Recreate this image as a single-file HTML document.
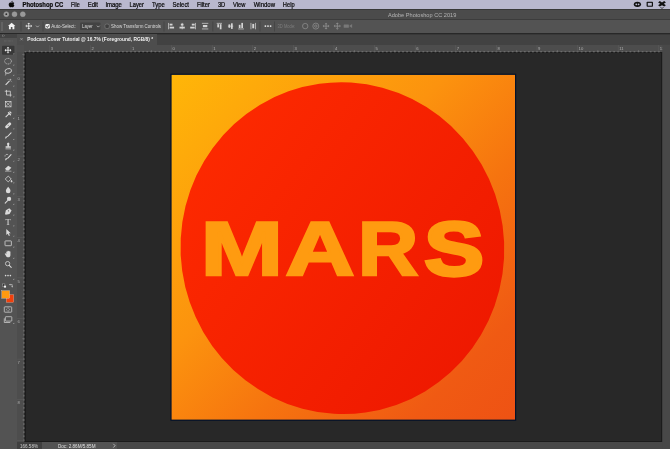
<!DOCTYPE html>
<html><head><meta charset="utf-8"><title>Adobe Photoshop CC 2019</title>
<style>
html,body{margin:0;padding:0;}
body{width:670px;height:449px;overflow:hidden;background:#282828;position:relative;font-family:"Liberation Sans",sans-serif;}
.abs{position:absolute;}
#menubar{left:0;top:0;width:670px;height:9px;background:#b9b8ce;}
#titlebar{left:0;top:9px;width:670px;height:10.2px;background:#4b4b4b;border-top:0.6px solid #393939;box-sizing:border-box;}
#optbar{left:0;top:19.2px;width:670px;height:14.3px;background:#535353;border-top:0.6px solid #3c3c3c;box-sizing:border-box;}
#tabbar{left:0;top:33.5px;width:670px;height:11.2px;background:#424242;border-top:0.6px solid #383838;box-sizing:border-box;}
#tab{left:17.2px;top:34.1px;width:139.6px;height:10.6px;background:#4d4d4d;}
#tools{left:0;top:33.5px;width:16.7px;height:416px;background:#535353;}
#toolshead{left:0;top:33.5px;width:16.7px;height:4px;background:#434343;}
#hruler{left:16.7px;top:44.7px;width:654px;height:7.7px;background:#4d4d4d;}
#vruler{left:16.7px;top:44.7px;width:7.8px;height:398px;background:#4d4d4d;}
#canvas{left:24.5px;top:52.4px;width:637.8px;height:389.8px;background:#282828;box-sizing:border-box;border:0.8px solid #1b1b1b;}
#rscroll{left:662.7px;top:52px;width:7.3px;height:397px;background:#474747;}
#status{left:16.7px;top:442.2px;width:654px;height:7px;background:#484848;}
#szoom{left:16.7px;top:442.2px;width:25px;height:7px;background:#404040;}
#sdoc{left:41.7px;top:442.2px;width:75.5px;height:7px;background:#535353;}
svg{position:absolute;left:0;top:0;overflow:visible;will-change:transform;}
text{font-family:"Liberation Sans",sans-serif;}
.mars text,.mars tspan{font-family:"Liberation Sans",sans-serif;font-weight:bold;vector-effect:non-scaling-stroke;}
.m{font-size:6.6px;fill:#0a0a0a;stroke:#0a0a0a;stroke-width:0.22px;}
.o{font-size:5.2px;fill:#dcdcdc;}
.r{font-size:4.2px;fill:#b0b0b0;}
</style></head><body>
<div class="abs" id="menubar"></div>
<div class="abs" id="titlebar"></div>
<div class="abs" id="optbar"></div>
<div class="abs" id="tabbar"></div>
<div class="abs" id="tab"></div>
<div class="abs" id="hruler"></div>
<div class="abs" id="vruler"></div>
<div class="abs" id="canvas"></div>
<div class="abs" id="rscroll"></div>
<div class="abs" id="status"></div>
<div class="abs" id="szoom"></div>
<div class="abs" id="sdoc"></div>
<div class="abs" id="tools"></div>
<div class="abs" id="toolshead"></div>

<svg id="art" width="670" height="449" viewBox="0 0 670 449">
<defs>
<linearGradient id="gbg" x1="0" y1="0" x2="1" y2="1">
<stop offset="0" stop-color="#ffb608"/><stop offset="0.4" stop-color="#fc930e"/><stop offset="0.62" stop-color="#f6740f"/><stop offset="0.85" stop-color="#f05a13"/><stop offset="1" stop-color="#ee5214"/>
</linearGradient>
<linearGradient id="gc" x1="0" y1="0" x2="1" y2="1">
<stop offset="0" stop-color="#ff2c00"/><stop offset="1" stop-color="#ec1600"/>
</linearGradient>
</defs>
<rect x="170.4" y="73.7" width="345.8" height="347.1" fill="#04122a"/>
<rect x="171.6" y="74.9" width="343.4" height="344.7" fill="url(#gbg)"/>
<ellipse cx="342.4" cy="248.2" rx="161.8" ry="166" transform="rotate(-8 342.4 248.2)" fill="url(#gc)"/>
<g class="mars" font-size="76.02" fill="#ff9b10" stroke="#ff9b10" stroke-width="2.6" stroke-linejoin="miter"><text y="275.3"><tspan x="200.7" textLength="82.21" lengthAdjust="spacingAndGlyphs">M</tspan><tspan x="285.62" textLength="69.01" lengthAdjust="spacingAndGlyphs">A</tspan><tspan x="358.03" textLength="60.18" lengthAdjust="spacingAndGlyphs">R</tspan><tspan x="424.32" textLength="59.68" lengthAdjust="spacingAndGlyphs" stroke-width="3.4">S</tspan></text></g>
</svg>

<svg id="ui" width="670" height="449" viewBox="0 0 670 449"><defs><clipPath id="mclip"><rect x="0" y="0" width="670" height="9"/></clipPath></defs>
<g fill="#0a0a0a"><path d="M11.3 2.6c-.9-.5-2.4.1-2.6 1.6-.2 1.400.900 3 1.700 3 .5 0 .7-.3 1.200-.3s.7.3 1.200.3c.7 0 1.500-1.200 1.600-1.900-.8-.3-1.100-1.500-.1-2.300-.5-.7-1.500-.9-2.100-.5-.3.200-.6.200-.9.100z"/><path d="M11.300 2.300c0-.8.600-1.500 1.400-1.600.1.800-.6 1.600-1.400 1.600z"/></g>
<text class="m" clip-path="url(#mclip)" x="22.5" y="6.75" textLength="40.7" lengthAdjust="spacingAndGlyphs" font-weight="bold">Photoshop CC</text>
<text class="m" clip-path="url(#mclip)" x="71" y="6.75" textLength="8.7" lengthAdjust="spacingAndGlyphs" >File</text>
<text class="m" clip-path="url(#mclip)" x="87.7" y="6.75" textLength="10.3" lengthAdjust="spacingAndGlyphs" >Edit</text>
<text class="m" clip-path="url(#mclip)" x="105.4" y="6.75" textLength="16.5" lengthAdjust="spacingAndGlyphs" >Image</text>
<text class="m" clip-path="url(#mclip)" x="129.6" y="6.75" textLength="14.3" lengthAdjust="spacingAndGlyphs" >Layer</text>
<text class="m" clip-path="url(#mclip)" x="152" y="6.75" textLength="12.8" lengthAdjust="spacingAndGlyphs" >Type</text>
<text class="m" clip-path="url(#mclip)" x="172.5" y="6.75" textLength="16.5" lengthAdjust="spacingAndGlyphs" >Select</text>
<text class="m" clip-path="url(#mclip)" x="196.9" y="6.75" textLength="13.1" lengthAdjust="spacingAndGlyphs" >Filter</text>
<text class="m" clip-path="url(#mclip)" x="217.9" y="6.75" textLength="7.4" lengthAdjust="spacingAndGlyphs" >3D</text>
<text class="m" clip-path="url(#mclip)" x="233" y="6.75" textLength="12.3" lengthAdjust="spacingAndGlyphs" >View</text>
<text class="m" clip-path="url(#mclip)" x="253.7" y="6.75" textLength="21.3" lengthAdjust="spacingAndGlyphs" >Window</text>
<text class="m" clip-path="url(#mclip)" x="282.8" y="6.75" textLength="11.8" lengthAdjust="spacingAndGlyphs" >Help</text>
<g fill="#111"><ellipse cx="637.4" cy="4.3" rx="3.6" ry="2.6"/><rect x="646.6" y="1.8" width="6.4" height="5" rx="0.8"/><rect x="647.8" y="2.9" width="4" height="2.800" fill="#b9b8ce"/><path d="M659.800 1l2.200 1.400 2.200-1.400 1.700 1.400-2.200 1.400 2.200 1.400-1.700 1.400-2.200-1.400-2.200 1.400-1.700-1.400 2.200-1.400-2.200-1.400z"/><path d="M660.300 7l1.700 1.100 1.700-1.100v.6l-1.700 1.100-1.700-1.100z"/></g>
<g fill="#b9b8ce"><circle cx="636.3" cy="4.3" r="0.9"/><circle cx="638.600" cy="4.300" r="0.900"/></g>
<g fill="#999" stroke="#a6a6a6" stroke-width="0.4"><circle cx="6.3" cy="14.2" r="2.500"/><circle cx="14.5" cy="14.2" r="2.500"/><circle cx="22.8" cy="14.2" r="2.500"/></g><circle cx="6.3" cy="14.2" r="0.9" fill="#2e2e2e"/>
<text class="o"  x="388" y="16.6" textLength="68.3" lengthAdjust="spacingAndGlyphs" style="fill:#b4b4b4;font-size:5.4px">Adobe Photoshop CC 2019</text>
<g fill="#6e6e6e"><rect x="1.2" y="22" width="0.6" height="9"/><rect x="2.4" y="22" width="0.6" height="9"/></g>
<path d="M11.650 22.700l3.700 3.200h-1v3.300h-1.900v-2.100h-1.600v2.100h-1.900v-3.300h-1z" fill="#f2f2f2"/>
<rect x="20.7" y="21.5" width="0.6" height="10" fill="#3e3e3e"/>
<rect x="42.7" y="21.5" width="0.6" height="10" fill="#3e3e3e"/>
<rect x="163.7" y="21.5" width="0.6" height="10" fill="#3e3e3e"/>
<rect x="212.6" y="21.5" width="0.6" height="10" fill="#3e3e3e"/>
<rect x="259.7" y="21.5" width="0.6" height="10" fill="#3e3e3e"/>
<rect x="274.2" y="21.5" width="0.6" height="10" fill="#3e3e3e"/>
<g fill="#e6e6e6"><path d="M28.75 22.650000000000002l1.428 1.428h-2.856z M28.75 29.45l1.428 -1.428h-2.856z M25.35 26.05l1.428 1.428v-2.856z M32.15 26.05l-1.428 1.428v-2.856z"/><rect x="28.3" y="24.078000000000003" width="0.9" height="3.944"/><rect x="26.778000000000002" y="25.6" width="3.944" height="0.9"/></g>
<path d="M36 25.600l1.500 1.500 1.500-1.500" fill="none" stroke="#cfcfcf" stroke-width="0.7"/>
<rect x="45.3" y="24.0" width="4.6" height="4.600" rx="1.4" fill="#efefef"/><path d="M46.400 26.300l1 1.100 1.500-2.100" fill="none" stroke="#2a2a2a" stroke-width="0.9"/>
<text class="o"  x="51.2" y="28.1" textLength="24.7" lengthAdjust="spacingAndGlyphs" >Auto-Select:</text>
<rect x="80" y="22.6" width="20.500" height="7.400" rx="0.800" fill="#434343"/>
<text class="o"  x="82.1" y="28.1" textLength="10.7" lengthAdjust="spacingAndGlyphs" >Layer</text>
<path d="M96.9 25.700l1.400 1.400 1.400-1.400" fill="none" stroke="#cfcfcf" stroke-width="0.7"/>
<rect x="104.9" y="24.1" width="4.400" height="4.400" rx="1.5" fill="#3e3e3e" stroke="#858585" stroke-width="0.6"/>
<text class="o"  x="111" y="28.1" textLength="50.1" lengthAdjust="spacingAndGlyphs" >Show Transform Controls</text>
<g fill="#d4d4d4"><rect x="168.3" y="22.900000000000002" width="0.7" height="6.4"/><rect x="169.60000000000002" y="23.700000000000003" width="2.8999999999999915" height="1.800"/><rect x="169.60000000000002" y="26.700000000000003" width="4.499999999999983" height="1.800"/></g>
<g fill="#d4d4d4"><rect x="181.8" y="22.900000000000002" width="0.7" height="6.4"/><rect x="180.825" y="23.700000000000003" width="2.6500000000000057" height="1.800"/><rect x="179.5" y="26.700000000000003" width="5.300000000000011" height="1.800"/></g>
<g fill="#d4d4d4"><rect x="195.3" y="22.900000000000002" width="0.7" height="6.4"/><rect x="191.79999999999998" y="23.700000000000003" width="2.9000000000000057" height="1.800"/><rect x="190.2" y="26.700000000000003" width="4.5000000000000115" height="1.800"/></g>
<g fill="#d4d4d4"><rect x="201.9" y="22.900000000000002" width="6.400000000000006" height="0.7"/><rect x="201.9" y="28.6" width="6.400000000000006" height="0.7"/><rect x="202.9" y="25.0" width="4.400000000000006" height="2.200"/></g>
<g fill="#d4d4d4"><rect x="216.7" y="22.900000000000002" width="5.300000000000011" height="0.7"/><rect x="217.29999999999998" y="24.200000000000003" width="1.700" height="3.200"/><rect x="219.79999999999998" y="24.200000000000003" width="1.700" height="5.100"/></g>
<g fill="#d4d4d4"><rect x="227.9" y="25.75" width="5.299999999999983" height="0.7"/><rect x="228.5" y="24.400000000000002" width="1.700" height="3.400"/><rect x="231.0" y="23.3" width="1.700" height="5.600"/></g>
<g fill="#d4d4d4"><rect x="238.2" y="28.6" width="5.700000000000017" height="0.7"/><rect x="238.79999999999998" y="24.8" width="1.700" height="3.200"/><rect x="241.29999999999998" y="22.900000000000002" width="1.700" height="5.100"/></g>
<g fill="#d4d4d4"><rect x="250.6" y="22.900000000000002" width="0.7" height="6.4"/><rect x="255.20000000000002" y="22.900000000000002" width="0.7" height="6.4"/><rect x="252.29999999999998" y="23.900000000000002" width="1.9000000000000115" height="4.400"/></g>
<g fill="#e8e8e8"><circle cx="265.4" cy="26.1" r="0.900"/><circle cx="268" cy="26.1" r="0.900"/><circle cx="270.600" cy="26.1" r="0.900"/></g>
<text class="o"  x="277.6" y="28.1" textLength="17.7" lengthAdjust="spacingAndGlyphs" style="fill:#7c7c7c">3D Mode:</text>
<g fill="none" stroke="#8c8c8c" stroke-width="0.800"><circle cx="305.2" cy="26.1" r="2.700"/><circle cx="315.800" cy="26.1" r="3"/><circle cx="315.800" cy="26.1" r="1.200"/></g>
<g fill="#8c8c8c"><path d="M326.05 22.700000000000003l1.428 1.428h-2.856z M326.05 29.5l1.428 -1.428h-2.856z M322.65000000000003 26.1l1.428 1.428v-2.856z M329.45 26.1l-1.428 1.428v-2.856z"/><rect x="325.6" y="24.128000000000004" width="0.9" height="3.944"/><rect x="324.07800000000003" y="25.650000000000002" width="3.944" height="0.9"/></g>
<g fill="#8c8c8c"><path d="M337.3 22.5l1.512 1.512h-3.024z M337.3 29.700000000000003l1.512 -1.512h-3.024z M333.7 26.1l1.512 1.512v-3.024z M340.90000000000003 26.1l-1.512 1.512v-3.024z"/><rect x="336.85" y="24.012" width="0.9" height="4.176"/><rect x="335.212" y="25.650000000000002" width="4.176" height="0.9"/></g>
<g fill="#787878"><rect x="343.700" y="24.400" width="5.200" height="3.400" rx="0.500"/><path d="M349.200 26.100l2.900-2v4z"/></g>
<path d="M20.300 38l2.400 2.400m0-2.400l-2.400 2.400" stroke="#a8a8a8" stroke-width="0.6" fill="none"/>
<text class="o"  x="27.2" y="41.2" textLength="125.9" lengthAdjust="spacingAndGlyphs" font-weight="bold" style="fill:#f0f0f0;font-size:5.4px">Podcast Cover Tutorial @ 16.7% (Foreground, RGB/8) *</text>
<path d="M2 34.800l1 .900-1 .900m1.500-1.800l1 .900-1 .900" stroke="#a0a0a0" stroke-width="0.5" fill="none"/>
<g fill="#6a6a6a"><rect x="4.0" y="40.3" width="0.6" height="0.6"/><rect x="4.0" y="41.500" width="0.6" height="0.6"/><rect x="5.3" y="40.3" width="0.6" height="0.6"/><rect x="5.3" y="41.500" width="0.6" height="0.6"/><rect x="6.6" y="40.3" width="0.6" height="0.6"/><rect x="6.6" y="41.500" width="0.6" height="0.6"/><rect x="7.9" y="40.3" width="0.6" height="0.6"/><rect x="7.9" y="41.500" width="0.6" height="0.6"/><rect x="9.2" y="40.3" width="0.6" height="0.6"/><rect x="9.2" y="41.500" width="0.6" height="0.6"/><rect x="10.5" y="40.3" width="0.6" height="0.6"/><rect x="10.5" y="41.500" width="0.6" height="0.6"/><rect x="11.8" y="40.3" width="0.6" height="0.6"/><rect x="11.8" y="41.500" width="0.6" height="0.6"/></g>
<rect x="24.54" y="51.3" width="1.8" height="1.0" fill="#787878"/><rect x="28.60" y="51.3" width="1.8" height="1.0" fill="#787878"/><rect x="29.10" y="50.3" width="0.8" height="1.2" fill="#787878"/><rect x="32.66" y="51.3" width="1.8" height="1.0" fill="#787878"/><rect x="36.72" y="51.3" width="1.8" height="1.0" fill="#787878"/><rect x="40.78" y="51.3" width="1.8" height="1.0" fill="#787878"/><rect x="44.84" y="51.3" width="1.8" height="1.0" fill="#787878"/><rect x="48.90" y="51.3" width="1.8" height="1.0" fill="#787878"/><rect x="49.50" y="45.2" width="0.6" height="6.4" fill="#5c5c5c"/><text class="r" x="50.80" y="50.2">3</text><rect x="52.96" y="51.3" width="1.8" height="1.0" fill="#787878"/><rect x="57.02" y="51.3" width="1.8" height="1.0" fill="#787878"/><rect x="61.08" y="51.3" width="1.8" height="1.0" fill="#787878"/><rect x="65.14" y="51.3" width="1.8" height="1.0" fill="#787878"/><rect x="69.20" y="51.3" width="1.8" height="1.0" fill="#787878"/><rect x="69.70" y="50.3" width="0.8" height="1.2" fill="#787878"/><rect x="73.26" y="51.3" width="1.8" height="1.0" fill="#787878"/><rect x="77.32" y="51.3" width="1.8" height="1.0" fill="#787878"/><rect x="81.38" y="51.3" width="1.8" height="1.0" fill="#787878"/><rect x="85.44" y="51.3" width="1.8" height="1.0" fill="#787878"/><rect x="89.50" y="51.3" width="1.8" height="1.0" fill="#787878"/><rect x="90.10" y="45.2" width="0.6" height="6.4" fill="#5c5c5c"/><text class="r" x="91.40" y="50.2">2</text><rect x="93.56" y="51.3" width="1.8" height="1.0" fill="#787878"/><rect x="97.62" y="51.3" width="1.8" height="1.0" fill="#787878"/><rect x="101.68" y="51.3" width="1.8" height="1.0" fill="#787878"/><rect x="105.74" y="51.3" width="1.8" height="1.0" fill="#787878"/><rect x="109.80" y="51.3" width="1.8" height="1.0" fill="#787878"/><rect x="110.30" y="50.3" width="0.8" height="1.2" fill="#787878"/><rect x="113.86" y="51.3" width="1.8" height="1.0" fill="#787878"/><rect x="117.92" y="51.3" width="1.8" height="1.0" fill="#787878"/><rect x="121.98" y="51.3" width="1.8" height="1.0" fill="#787878"/><rect x="126.04" y="51.3" width="1.8" height="1.0" fill="#787878"/><rect x="130.10" y="51.3" width="1.8" height="1.0" fill="#787878"/><rect x="130.70" y="45.2" width="0.6" height="6.4" fill="#5c5c5c"/><text class="r" x="132.00" y="50.2">1</text><rect x="134.16" y="51.3" width="1.8" height="1.0" fill="#787878"/><rect x="138.22" y="51.3" width="1.8" height="1.0" fill="#787878"/><rect x="142.28" y="51.3" width="1.8" height="1.0" fill="#787878"/><rect x="146.34" y="51.3" width="1.8" height="1.0" fill="#787878"/><rect x="150.40" y="51.3" width="1.8" height="1.0" fill="#787878"/><rect x="150.90" y="50.3" width="0.8" height="1.2" fill="#787878"/><rect x="154.46" y="51.3" width="1.8" height="1.0" fill="#787878"/><rect x="158.52" y="51.3" width="1.8" height="1.0" fill="#787878"/><rect x="162.58" y="51.3" width="1.8" height="1.0" fill="#787878"/><rect x="166.64" y="51.3" width="1.8" height="1.0" fill="#787878"/><rect x="170.70" y="51.3" width="1.8" height="1.0" fill="#787878"/><rect x="171.30" y="45.2" width="0.6" height="6.4" fill="#5c5c5c"/><text class="r" x="172.60" y="50.2">0</text><rect x="174.76" y="51.3" width="1.8" height="1.0" fill="#787878"/><rect x="178.82" y="51.3" width="1.8" height="1.0" fill="#787878"/><rect x="182.88" y="51.3" width="1.8" height="1.0" fill="#787878"/><rect x="186.94" y="51.3" width="1.8" height="1.0" fill="#787878"/><rect x="191.00" y="51.3" width="1.8" height="1.0" fill="#787878"/><rect x="191.50" y="50.3" width="0.8" height="1.2" fill="#787878"/><rect x="195.06" y="51.3" width="1.8" height="1.0" fill="#787878"/><rect x="199.12" y="51.3" width="1.8" height="1.0" fill="#787878"/><rect x="203.18" y="51.3" width="1.8" height="1.0" fill="#787878"/><rect x="207.24" y="51.3" width="1.8" height="1.0" fill="#787878"/><rect x="211.30" y="51.3" width="1.8" height="1.0" fill="#787878"/><rect x="211.90" y="45.2" width="0.6" height="6.4" fill="#5c5c5c"/><text class="r" x="213.20" y="50.2">1</text><rect x="215.36" y="51.3" width="1.8" height="1.0" fill="#787878"/><rect x="219.42" y="51.3" width="1.8" height="1.0" fill="#787878"/><rect x="223.48" y="51.3" width="1.8" height="1.0" fill="#787878"/><rect x="227.54" y="51.3" width="1.8" height="1.0" fill="#787878"/><rect x="231.60" y="51.3" width="1.8" height="1.0" fill="#787878"/><rect x="232.10" y="50.3" width="0.8" height="1.2" fill="#787878"/><rect x="235.66" y="51.3" width="1.8" height="1.0" fill="#787878"/><rect x="239.72" y="51.3" width="1.8" height="1.0" fill="#787878"/><rect x="243.78" y="51.3" width="1.8" height="1.0" fill="#787878"/><rect x="247.84" y="51.3" width="1.8" height="1.0" fill="#787878"/><rect x="251.90" y="51.3" width="1.8" height="1.0" fill="#787878"/><rect x="252.50" y="45.2" width="0.6" height="6.4" fill="#5c5c5c"/><text class="r" x="253.80" y="50.2">2</text><rect x="255.96" y="51.3" width="1.8" height="1.0" fill="#787878"/><rect x="260.02" y="51.3" width="1.8" height="1.0" fill="#787878"/><rect x="264.08" y="51.3" width="1.8" height="1.0" fill="#787878"/><rect x="268.14" y="51.3" width="1.8" height="1.0" fill="#787878"/><rect x="272.20" y="51.3" width="1.8" height="1.0" fill="#787878"/><rect x="272.70" y="50.3" width="0.8" height="1.2" fill="#787878"/><rect x="276.26" y="51.3" width="1.8" height="1.0" fill="#787878"/><rect x="280.32" y="51.3" width="1.8" height="1.0" fill="#787878"/><rect x="284.38" y="51.3" width="1.8" height="1.0" fill="#787878"/><rect x="288.44" y="51.3" width="1.8" height="1.0" fill="#787878"/><rect x="292.50" y="51.3" width="1.8" height="1.0" fill="#787878"/><rect x="293.10" y="45.2" width="0.6" height="6.4" fill="#5c5c5c"/><text class="r" x="294.40" y="50.2">3</text><rect x="296.56" y="51.3" width="1.8" height="1.0" fill="#787878"/><rect x="300.62" y="51.3" width="1.8" height="1.0" fill="#787878"/><rect x="304.68" y="51.3" width="1.8" height="1.0" fill="#787878"/><rect x="308.74" y="51.3" width="1.8" height="1.0" fill="#787878"/><rect x="312.80" y="51.3" width="1.8" height="1.0" fill="#787878"/><rect x="313.30" y="50.3" width="0.8" height="1.2" fill="#787878"/><rect x="316.86" y="51.3" width="1.8" height="1.0" fill="#787878"/><rect x="320.92" y="51.3" width="1.8" height="1.0" fill="#787878"/><rect x="324.98" y="51.3" width="1.8" height="1.0" fill="#787878"/><rect x="329.04" y="51.3" width="1.8" height="1.0" fill="#787878"/><rect x="333.10" y="51.3" width="1.8" height="1.0" fill="#787878"/><rect x="333.70" y="45.2" width="0.6" height="6.4" fill="#5c5c5c"/><text class="r" x="335.00" y="50.2">4</text><rect x="337.16" y="51.3" width="1.8" height="1.0" fill="#787878"/><rect x="341.22" y="51.3" width="1.8" height="1.0" fill="#787878"/><rect x="345.28" y="51.3" width="1.8" height="1.0" fill="#787878"/><rect x="349.34" y="51.3" width="1.8" height="1.0" fill="#787878"/><rect x="353.40" y="51.3" width="1.8" height="1.0" fill="#787878"/><rect x="353.90" y="50.3" width="0.8" height="1.2" fill="#787878"/><rect x="357.46" y="51.3" width="1.8" height="1.0" fill="#787878"/><rect x="361.52" y="51.3" width="1.8" height="1.0" fill="#787878"/><rect x="365.58" y="51.3" width="1.8" height="1.0" fill="#787878"/><rect x="369.64" y="51.3" width="1.8" height="1.0" fill="#787878"/><rect x="373.70" y="51.3" width="1.8" height="1.0" fill="#787878"/><rect x="374.30" y="45.2" width="0.6" height="6.4" fill="#5c5c5c"/><text class="r" x="375.60" y="50.2">5</text><rect x="377.76" y="51.3" width="1.8" height="1.0" fill="#787878"/><rect x="381.82" y="51.3" width="1.8" height="1.0" fill="#787878"/><rect x="385.88" y="51.3" width="1.8" height="1.0" fill="#787878"/><rect x="389.94" y="51.3" width="1.8" height="1.0" fill="#787878"/><rect x="394.00" y="51.3" width="1.8" height="1.0" fill="#787878"/><rect x="394.50" y="50.3" width="0.8" height="1.2" fill="#787878"/><rect x="398.06" y="51.3" width="1.8" height="1.0" fill="#787878"/><rect x="402.12" y="51.3" width="1.8" height="1.0" fill="#787878"/><rect x="406.18" y="51.3" width="1.8" height="1.0" fill="#787878"/><rect x="410.24" y="51.3" width="1.8" height="1.0" fill="#787878"/><rect x="414.30" y="51.3" width="1.8" height="1.0" fill="#787878"/><rect x="414.90" y="45.2" width="0.6" height="6.4" fill="#5c5c5c"/><text class="r" x="416.20" y="50.2">6</text><rect x="418.36" y="51.3" width="1.8" height="1.0" fill="#787878"/><rect x="422.42" y="51.3" width="1.8" height="1.0" fill="#787878"/><rect x="426.48" y="51.3" width="1.8" height="1.0" fill="#787878"/><rect x="430.54" y="51.3" width="1.8" height="1.0" fill="#787878"/><rect x="434.60" y="51.3" width="1.8" height="1.0" fill="#787878"/><rect x="435.10" y="50.3" width="0.8" height="1.2" fill="#787878"/><rect x="438.66" y="51.3" width="1.8" height="1.0" fill="#787878"/><rect x="442.72" y="51.3" width="1.8" height="1.0" fill="#787878"/><rect x="446.78" y="51.3" width="1.8" height="1.0" fill="#787878"/><rect x="450.84" y="51.3" width="1.8" height="1.0" fill="#787878"/><rect x="454.90" y="51.3" width="1.8" height="1.0" fill="#787878"/><rect x="455.50" y="45.2" width="0.6" height="6.4" fill="#5c5c5c"/><text class="r" x="456.80" y="50.2">7</text><rect x="458.96" y="51.3" width="1.8" height="1.0" fill="#787878"/><rect x="463.02" y="51.3" width="1.8" height="1.0" fill="#787878"/><rect x="467.08" y="51.3" width="1.8" height="1.0" fill="#787878"/><rect x="471.14" y="51.3" width="1.8" height="1.0" fill="#787878"/><rect x="475.20" y="51.3" width="1.8" height="1.0" fill="#787878"/><rect x="475.70" y="50.3" width="0.8" height="1.2" fill="#787878"/><rect x="479.26" y="51.3" width="1.8" height="1.0" fill="#787878"/><rect x="483.32" y="51.3" width="1.8" height="1.0" fill="#787878"/><rect x="487.38" y="51.3" width="1.8" height="1.0" fill="#787878"/><rect x="491.44" y="51.3" width="1.8" height="1.0" fill="#787878"/><rect x="495.50" y="51.3" width="1.8" height="1.0" fill="#787878"/><rect x="496.10" y="45.2" width="0.6" height="6.4" fill="#5c5c5c"/><text class="r" x="497.40" y="50.2">8</text><rect x="499.56" y="51.3" width="1.8" height="1.0" fill="#787878"/><rect x="503.62" y="51.3" width="1.8" height="1.0" fill="#787878"/><rect x="507.68" y="51.3" width="1.8" height="1.0" fill="#787878"/><rect x="511.74" y="51.3" width="1.8" height="1.0" fill="#787878"/><rect x="515.80" y="51.3" width="1.8" height="1.0" fill="#787878"/><rect x="516.30" y="50.3" width="0.8" height="1.2" fill="#787878"/><rect x="519.86" y="51.3" width="1.8" height="1.0" fill="#787878"/><rect x="523.92" y="51.3" width="1.8" height="1.0" fill="#787878"/><rect x="527.98" y="51.3" width="1.8" height="1.0" fill="#787878"/><rect x="532.04" y="51.3" width="1.8" height="1.0" fill="#787878"/><rect x="536.10" y="51.3" width="1.8" height="1.0" fill="#787878"/><rect x="536.70" y="45.2" width="0.6" height="6.4" fill="#5c5c5c"/><text class="r" x="538.00" y="50.2">9</text><rect x="540.16" y="51.3" width="1.8" height="1.0" fill="#787878"/><rect x="544.22" y="51.3" width="1.8" height="1.0" fill="#787878"/><rect x="548.28" y="51.3" width="1.8" height="1.0" fill="#787878"/><rect x="552.34" y="51.3" width="1.8" height="1.0" fill="#787878"/><rect x="556.40" y="51.3" width="1.8" height="1.0" fill="#787878"/><rect x="556.90" y="50.3" width="0.8" height="1.2" fill="#787878"/><rect x="560.46" y="51.3" width="1.8" height="1.0" fill="#787878"/><rect x="564.52" y="51.3" width="1.8" height="1.0" fill="#787878"/><rect x="568.58" y="51.3" width="1.8" height="1.0" fill="#787878"/><rect x="572.64" y="51.3" width="1.8" height="1.0" fill="#787878"/><rect x="576.70" y="51.3" width="1.8" height="1.0" fill="#787878"/><rect x="577.30" y="45.2" width="0.6" height="6.4" fill="#5c5c5c"/><text class="r" x="578.60" y="50.2">10</text><rect x="580.76" y="51.3" width="1.8" height="1.0" fill="#787878"/><rect x="584.82" y="51.3" width="1.8" height="1.0" fill="#787878"/><rect x="588.88" y="51.3" width="1.8" height="1.0" fill="#787878"/><rect x="592.94" y="51.3" width="1.8" height="1.0" fill="#787878"/><rect x="597.00" y="51.3" width="1.8" height="1.0" fill="#787878"/><rect x="597.50" y="50.3" width="0.8" height="1.2" fill="#787878"/><rect x="601.06" y="51.3" width="1.8" height="1.0" fill="#787878"/><rect x="605.12" y="51.3" width="1.8" height="1.0" fill="#787878"/><rect x="609.18" y="51.3" width="1.8" height="1.0" fill="#787878"/><rect x="613.24" y="51.3" width="1.8" height="1.0" fill="#787878"/><rect x="617.30" y="51.3" width="1.8" height="1.0" fill="#787878"/><rect x="617.90" y="45.2" width="0.6" height="6.4" fill="#5c5c5c"/><text class="r" x="619.20" y="50.2">11</text><rect x="621.36" y="51.3" width="1.8" height="1.0" fill="#787878"/><rect x="625.42" y="51.3" width="1.8" height="1.0" fill="#787878"/><rect x="629.48" y="51.3" width="1.8" height="1.0" fill="#787878"/><rect x="633.54" y="51.3" width="1.8" height="1.0" fill="#787878"/><rect x="637.60" y="51.3" width="1.8" height="1.0" fill="#787878"/><rect x="638.10" y="50.3" width="0.8" height="1.2" fill="#787878"/><rect x="641.66" y="51.3" width="1.8" height="1.0" fill="#787878"/><rect x="645.72" y="51.3" width="1.8" height="1.0" fill="#787878"/><rect x="649.78" y="51.3" width="1.8" height="1.0" fill="#787878"/><rect x="653.84" y="51.3" width="1.8" height="1.0" fill="#787878"/><rect x="657.90" y="51.3" width="1.8" height="1.0" fill="#787878"/><rect x="658.50" y="45.2" width="0.6" height="6.4" fill="#5c5c5c"/><text class="r" x="659.80" y="50.2">12</text><rect x="23.4" y="53.70" width="1.0" height="1.8" fill="#787878"/><rect x="22.4" y="54.20" width="1.2" height="0.8" fill="#787878"/><rect x="23.4" y="57.76" width="1.0" height="1.8" fill="#787878"/><rect x="23.4" y="61.82" width="1.0" height="1.8" fill="#787878"/><rect x="23.4" y="65.88" width="1.0" height="1.8" fill="#787878"/><rect x="23.4" y="69.94" width="1.0" height="1.8" fill="#787878"/><rect x="23.4" y="74.00" width="1.0" height="1.8" fill="#787878"/><rect x="17.2" y="74.60" width="6.4" height="0.6" fill="#5c5c5c"/><text class="r" x="17.6" y="79.50">0</text><rect x="23.4" y="78.06" width="1.0" height="1.8" fill="#787878"/><rect x="23.4" y="82.12" width="1.0" height="1.8" fill="#787878"/><rect x="23.4" y="86.18" width="1.0" height="1.8" fill="#787878"/><rect x="23.4" y="90.24" width="1.0" height="1.8" fill="#787878"/><rect x="23.4" y="94.30" width="1.0" height="1.8" fill="#787878"/><rect x="22.4" y="94.80" width="1.2" height="0.8" fill="#787878"/><rect x="23.4" y="98.36" width="1.0" height="1.8" fill="#787878"/><rect x="23.4" y="102.42" width="1.0" height="1.8" fill="#787878"/><rect x="23.4" y="106.48" width="1.0" height="1.8" fill="#787878"/><rect x="23.4" y="110.54" width="1.0" height="1.8" fill="#787878"/><rect x="23.4" y="114.60" width="1.0" height="1.8" fill="#787878"/><rect x="17.2" y="115.20" width="6.4" height="0.6" fill="#5c5c5c"/><text class="r" x="17.6" y="120.10">1</text><rect x="23.4" y="118.66" width="1.0" height="1.8" fill="#787878"/><rect x="23.4" y="122.72" width="1.0" height="1.8" fill="#787878"/><rect x="23.4" y="126.78" width="1.0" height="1.8" fill="#787878"/><rect x="23.4" y="130.84" width="1.0" height="1.8" fill="#787878"/><rect x="23.4" y="134.90" width="1.0" height="1.8" fill="#787878"/><rect x="22.4" y="135.40" width="1.2" height="0.8" fill="#787878"/><rect x="23.4" y="138.96" width="1.0" height="1.8" fill="#787878"/><rect x="23.4" y="143.02" width="1.0" height="1.8" fill="#787878"/><rect x="23.4" y="147.08" width="1.0" height="1.8" fill="#787878"/><rect x="23.4" y="151.14" width="1.0" height="1.8" fill="#787878"/><rect x="23.4" y="155.20" width="1.0" height="1.8" fill="#787878"/><rect x="17.2" y="155.80" width="6.4" height="0.6" fill="#5c5c5c"/><text class="r" x="17.6" y="160.70">2</text><rect x="23.4" y="159.26" width="1.0" height="1.8" fill="#787878"/><rect x="23.4" y="163.32" width="1.0" height="1.8" fill="#787878"/><rect x="23.4" y="167.38" width="1.0" height="1.8" fill="#787878"/><rect x="23.4" y="171.44" width="1.0" height="1.8" fill="#787878"/><rect x="23.4" y="175.50" width="1.0" height="1.8" fill="#787878"/><rect x="22.4" y="176.00" width="1.2" height="0.8" fill="#787878"/><rect x="23.4" y="179.56" width="1.0" height="1.8" fill="#787878"/><rect x="23.4" y="183.62" width="1.0" height="1.8" fill="#787878"/><rect x="23.4" y="187.68" width="1.0" height="1.8" fill="#787878"/><rect x="23.4" y="191.74" width="1.0" height="1.8" fill="#787878"/><rect x="23.4" y="195.80" width="1.0" height="1.8" fill="#787878"/><rect x="17.2" y="196.40" width="6.4" height="0.6" fill="#5c5c5c"/><text class="r" x="17.6" y="201.30">3</text><rect x="23.4" y="199.86" width="1.0" height="1.8" fill="#787878"/><rect x="23.4" y="203.92" width="1.0" height="1.8" fill="#787878"/><rect x="23.4" y="207.98" width="1.0" height="1.8" fill="#787878"/><rect x="23.4" y="212.04" width="1.0" height="1.8" fill="#787878"/><rect x="23.4" y="216.10" width="1.0" height="1.8" fill="#787878"/><rect x="22.4" y="216.60" width="1.2" height="0.8" fill="#787878"/><rect x="23.4" y="220.16" width="1.0" height="1.8" fill="#787878"/><rect x="23.4" y="224.22" width="1.0" height="1.8" fill="#787878"/><rect x="23.4" y="228.28" width="1.0" height="1.8" fill="#787878"/><rect x="23.4" y="232.34" width="1.0" height="1.8" fill="#787878"/><rect x="23.4" y="236.40" width="1.0" height="1.8" fill="#787878"/><rect x="17.2" y="237.00" width="6.4" height="0.6" fill="#5c5c5c"/><text class="r" x="17.6" y="241.90">4</text><rect x="23.4" y="240.46" width="1.0" height="1.8" fill="#787878"/><rect x="23.4" y="244.52" width="1.0" height="1.8" fill="#787878"/><rect x="23.4" y="248.58" width="1.0" height="1.8" fill="#787878"/><rect x="23.4" y="252.64" width="1.0" height="1.8" fill="#787878"/><rect x="23.4" y="256.70" width="1.0" height="1.8" fill="#787878"/><rect x="22.4" y="257.20" width="1.2" height="0.8" fill="#787878"/><rect x="23.4" y="260.76" width="1.0" height="1.8" fill="#787878"/><rect x="23.4" y="264.82" width="1.0" height="1.8" fill="#787878"/><rect x="23.4" y="268.88" width="1.0" height="1.8" fill="#787878"/><rect x="23.4" y="272.94" width="1.0" height="1.8" fill="#787878"/><rect x="23.4" y="277.00" width="1.0" height="1.8" fill="#787878"/><rect x="17.2" y="277.60" width="6.4" height="0.6" fill="#5c5c5c"/><text class="r" x="17.6" y="282.50">5</text><rect x="23.4" y="281.06" width="1.0" height="1.8" fill="#787878"/><rect x="23.4" y="285.12" width="1.0" height="1.8" fill="#787878"/><rect x="23.4" y="289.18" width="1.0" height="1.8" fill="#787878"/><rect x="23.4" y="293.24" width="1.0" height="1.8" fill="#787878"/><rect x="23.4" y="297.30" width="1.0" height="1.8" fill="#787878"/><rect x="22.4" y="297.80" width="1.2" height="0.8" fill="#787878"/><rect x="23.4" y="301.36" width="1.0" height="1.8" fill="#787878"/><rect x="23.4" y="305.42" width="1.0" height="1.8" fill="#787878"/><rect x="23.4" y="309.48" width="1.0" height="1.8" fill="#787878"/><rect x="23.4" y="313.54" width="1.0" height="1.8" fill="#787878"/><rect x="23.4" y="317.60" width="1.0" height="1.8" fill="#787878"/><rect x="17.2" y="318.20" width="6.4" height="0.6" fill="#5c5c5c"/><text class="r" x="17.6" y="323.10">6</text><rect x="23.4" y="321.66" width="1.0" height="1.8" fill="#787878"/><rect x="23.4" y="325.72" width="1.0" height="1.8" fill="#787878"/><rect x="23.4" y="329.78" width="1.0" height="1.8" fill="#787878"/><rect x="23.4" y="333.84" width="1.0" height="1.8" fill="#787878"/><rect x="23.4" y="337.90" width="1.0" height="1.8" fill="#787878"/><rect x="22.4" y="338.40" width="1.2" height="0.8" fill="#787878"/><rect x="23.4" y="341.96" width="1.0" height="1.8" fill="#787878"/><rect x="23.4" y="346.02" width="1.0" height="1.8" fill="#787878"/><rect x="23.4" y="350.08" width="1.0" height="1.8" fill="#787878"/><rect x="23.4" y="354.14" width="1.0" height="1.8" fill="#787878"/><rect x="23.4" y="358.20" width="1.0" height="1.8" fill="#787878"/><rect x="17.2" y="358.80" width="6.4" height="0.6" fill="#5c5c5c"/><text class="r" x="17.6" y="363.70">7</text><rect x="23.4" y="362.26" width="1.0" height="1.8" fill="#787878"/><rect x="23.4" y="366.32" width="1.0" height="1.8" fill="#787878"/><rect x="23.4" y="370.38" width="1.0" height="1.8" fill="#787878"/><rect x="23.4" y="374.44" width="1.0" height="1.8" fill="#787878"/><rect x="23.4" y="378.50" width="1.0" height="1.8" fill="#787878"/><rect x="22.4" y="379.00" width="1.2" height="0.8" fill="#787878"/><rect x="23.4" y="382.56" width="1.0" height="1.8" fill="#787878"/><rect x="23.4" y="386.62" width="1.0" height="1.8" fill="#787878"/><rect x="23.4" y="390.68" width="1.0" height="1.8" fill="#787878"/><rect x="23.4" y="394.74" width="1.0" height="1.8" fill="#787878"/><rect x="23.4" y="398.80" width="1.0" height="1.8" fill="#787878"/><rect x="17.2" y="399.40" width="6.4" height="0.6" fill="#5c5c5c"/><text class="r" x="17.6" y="404.30">8</text><rect x="23.4" y="402.86" width="1.0" height="1.8" fill="#787878"/><rect x="23.4" y="406.92" width="1.0" height="1.8" fill="#787878"/><rect x="23.4" y="410.98" width="1.0" height="1.8" fill="#787878"/><rect x="23.4" y="415.04" width="1.0" height="1.8" fill="#787878"/><rect x="23.4" y="419.10" width="1.0" height="1.8" fill="#787878"/><rect x="22.4" y="419.60" width="1.2" height="0.8" fill="#787878"/><rect x="23.4" y="423.16" width="1.0" height="1.8" fill="#787878"/><rect x="23.4" y="427.22" width="1.0" height="1.8" fill="#787878"/><rect x="23.4" y="431.28" width="1.0" height="1.8" fill="#787878"/><rect x="23.4" y="435.34" width="1.0" height="1.8" fill="#787878"/><rect x="23.4" y="439.40" width="1.0" height="1.8" fill="#787878"/><rect x="17.2" y="440.00" width="6.4" height="0.6" fill="#5c5c5c"/>
<rect x="662.3" y="44.7" width="7.7" height="404.3" fill="#484848"/>
<rect x="16.7" y="44.7" width="7.6" height="7.3" fill="#505050"/>
<text class="o"  x="20" y="447.6" textLength="18" lengthAdjust="spacingAndGlyphs" style="font-size:4.8px;fill:#d0d0d0">166.58%</text>
<text class="o"  x="58" y="447.6" textLength="37.5" lengthAdjust="spacingAndGlyphs" style="font-size:4.8px;fill:#e0e0e0">Doc: 2.86M/5.85M</text>
<path d="M113.300 443.800l1.800 1.900-1.800 1.900" stroke="#d8d8d8" stroke-width="0.7" fill="none"/>
</svg>
<svg id="toolsvg" width="670" height="449" viewBox="0 0 670 449">
<rect x="2" y="45.8" width="12.400" height="9" rx="0.8" fill="#383838"/>
<g fill="#f0f0f0"><path d="M8.0 46.800000000000004l1.428 1.428h-2.856z M8.0 53.6l1.428 -1.428h-2.856z M4.6 50.2l1.428 1.428v-2.856z M11.4 50.2l-1.428 1.428v-2.856z"/><rect x="7.55" y="48.228" width="0.9" height="3.944"/><rect x="6.028" y="49.75" width="3.944" height="0.9"/></g>
<path d="M13 54.2h1.200v-1.200z" fill="#bdbdbd"/>
<ellipse cx="8.0" cy="61.2" rx="3.400" ry="2.800" fill="none" stroke="#dadada" stroke-width="0.7" stroke-dasharray="1.2 0.6"/>
<path d="M13 65.4h1.200v-1.200z" fill="#bdbdbd"/>
<ellipse cx="8.3" cy="71" rx="3.300" ry="2.300" fill="none" stroke="#dadada" stroke-width="0.8" transform="rotate(-15 8.0 71)"/><path d="M6 72.800c-.8 1 .2 1.800-.6 2.600" stroke="#dadada" stroke-width="0.7" fill="none"/>
<path d="M13 75.7h1.200v-1.200z" fill="#bdbdbd"/>
<g transform="translate(8.2 82.0) scale(0.86) translate(-8 -82.2)">
<path d="M5 85.500l4.500-4.500" stroke="#dadada" stroke-width="1.300"/><path d="M10.500 78.500v2.200m-1.100-1.100h2.200m-4.300-.8l.9.900m3.200 1.700l.9.900" stroke="#dadada" stroke-width="0.6"/>
</g>
<path d="M13 86.4h1.200v-1.200z" fill="#bdbdbd"/>
<g transform="translate(8.2 93.1) scale(0.86) translate(-8 -93)">
<path d="M6 89.300v6h6m-8-4.500h6.500v6.300" stroke="#dadada" stroke-width="0.9" fill="none"/>
</g>
<path d="M13 97.2h1.200v-1.200z" fill="#bdbdbd"/>
<g transform="translate(8.2 104.1) scale(0.86) translate(-8 -104)">
<rect x="4.700" y="100.800" width="6.600" height="6.400" fill="none" stroke="#dadada" stroke-width="0.8"/><path d="M4.700 100.800l6.600 6.400m0-6.400l-6.600 6.400" stroke="#dadada" stroke-width="0.7"/>
</g>
<g transform="translate(8.2 114.6) scale(0.86) translate(-8 -114.8)">
<path d="M5 117.800l3.800-3.800" stroke="#dadada" stroke-width="1.200"/><path d="M8.300 112.700l2.300 2.300m-.6-3.400l1.200 1.200" stroke="#dadada" stroke-width="1.500" stroke-linecap="round"/>
</g>
<path d="M13 118.8h1.200v-1.200z" fill="#bdbdbd"/>
<g transform="translate(8.2 125.4) scale(0.86) translate(-8 -125.2)">
<rect x="3.800" y="123.400" width="8.400" height="3.400" rx="1.500" fill="#dadada" transform="rotate(-45 8 125.100)"/><circle cx="8" cy="125.100" r="0.600" fill="#535353"/>
</g>
<path d="M13 129.2h1.200v-1.200z" fill="#bdbdbd"/>
<g transform="translate(8.2 136) scale(0.86) translate(-8 -136)">
<path d="M11.300 132.300l-4 4.300" stroke="#dadada" stroke-width="1.200" stroke-linecap="round"/><path d="M6.800 136.800c-.5 1.600-1.700 2.200-2.600 2.100.7-.8.300-1.900 1.300-2.600z" fill="#dadada"/>
</g>
<path d="M13 140.0h1.200v-1.200z" fill="#bdbdbd"/>
<g transform="translate(8.2 147) scale(0.86) translate(-8 -146.2)">
<path d="M6.800 143.200a1.400 1.400 0 1 1 2.400 0l-.4 2h2.200v1.800h-6v-1.800h2.200z" fill="#dadada"/><rect x="4.800" y="148" width="6.400" height="0.800" fill="#dadada"/>
</g>
<path d="M13 150.39999999999998h1.200v-1.200z" fill="#bdbdbd"/>
<g transform="translate(8.2 157.7) scale(0.86) translate(-8 -157.6)">
<path d="M11.300 154l-4 4.300" stroke="#dadada" stroke-width="1.200" stroke-linecap="round"/><path d="M6.800 158.500c-.5 1.600-1.700 2.200-2.600 2.100.7-.8.300-1.900 1.300-2.600z" fill="#dadada"/><path d="M4.300 156.300a2.300 2.300 0 0 1 3.600-2.200" stroke="#dadada" stroke-width="0.700" fill="none"/>
</g>
<path d="M13 161.6h1.200v-1.200z" fill="#bdbdbd"/>
<g transform="translate(8.2 168.3) scale(0.86) translate(-8 -168.8)">
<path d="M4.300 169.300l3.700-3.600 3.700 2.400-3.200 3.200h-2.400z" fill="#dadada"/><rect x="4.300" y="171.700" width="7.400" height="0.700" fill="#dadada"/>
</g>
<path d="M13 172.7h1.200v-1.200z" fill="#bdbdbd"/>
<g transform="translate(8.2 179) scale(0.86) translate(-8 -179.3)">
<path d="M4.500 179.300l3.600-3.400 3.400 3.400-3.500 3.300z" fill="none" stroke="#dadada" stroke-width="0.9"/><path d="M11.900 180.200c.7 1 1 1.500 1 2a1 1 0 0 1-2 0c0-.5.300-1 1-2z" fill="#dadada"/>
</g>
<path d="M13 183.2h1.200v-1.200z" fill="#bdbdbd"/>
<g transform="translate(8.2 190) scale(0.86) translate(-8 -190)">
<path d="M8 186.300c1.700 2.100 2.700 3.500 2.700 4.800a2.700 2.700 0 0 1-5.400 0c0-1.300 1-2.700 2.700-4.800z" fill="#dadada"/>
</g>
<path d="M13 194.2h1.200v-1.200z" fill="#bdbdbd"/>
<g transform="translate(8.2 200.6) scale(0.86) translate(-8 -201.3)">
<circle cx="9" cy="199.400" r="2.500" fill="#dadada"/><path d="M7.300 201.300l-2.800 2.900" stroke="#dadada" stroke-width="1.200" stroke-linecap="round"/>
</g>
<path d="M13 204.79999999999998h1.200v-1.200z" fill="#bdbdbd"/>
<g transform="translate(8.2 211.3) scale(0.86) translate(-8 -211.7)">
<path d="M4.300 214.800l1-4.300 4-2.400 2.600 2.600-2.400 4-4.300 1z" fill="#dadada"/><circle cx="8.300" cy="211.200" r="0.700" fill="#535353"/>
</g>
<path d="M13 215.5h1.200v-1.200z" fill="#bdbdbd"/>
<text x="5.6" y="225.200" style="font-family:'Liberation Serif',serif;font-size:8.4px;fill:#e4e4e4">T</text>
<path d="M13 226.2h1.200v-1.200z" fill="#bdbdbd"/>
<g transform="translate(8.2 232.4) scale(0.86) translate(-8 -232.6)">
<path d="M5.800 228.600v7l1.700-1.500 1.300 2.800 1.200-.6-1.300-2.700h2.300z" fill="#dadada"/>
</g>
<path d="M13 236.6h1.200v-1.200z" fill="#bdbdbd"/>
<g transform="translate(8.2 243.3) scale(0.86) translate(-8 -243.2)">
<rect x="4.300" y="240.400" width="7.400" height="5.600" rx="0.600" fill="none" stroke="#dadada" stroke-width="0.9"/>
</g>
<path d="M13 247.5h1.200v-1.200z" fill="#bdbdbd"/>
<g transform="translate(8.2 254.5) scale(0.86) translate(-8 -254.6)">
<path d="M5.800 254.300v-2.600a.6.600 0 0 1 1.200 0v-1a.6.600 0 0 1 1.200 0v.2a.6.600 0 0 1 1.200 0v.6a.6.600 0 0 1 1.200 0v3.600c0 1.700-1 2.800-2.500 2.800-1.300 0-1.900-.6-2.600-1.700l-1.400-2.200c-.3-.6.400-1 .9-.5z" fill="#dadada"/>
</g>
<path d="M13 258.7h1.200v-1.200z" fill="#bdbdbd"/>
<g transform="translate(8.2 265) scale(0.86) translate(-8 -265.8)">
<circle cx="7.300" cy="264.200" r="2.500" fill="none" stroke="#dadada" stroke-width="0.9"/><path d="M9.200 266.200l2.300 2.400" stroke="#dadada" stroke-width="1.200" stroke-linecap="round"/>
</g>
<g fill="#dadada"><circle cx="5.600" cy="275.600" r="0.800"/><circle cx="8" cy="275.600" r="0.800"/><circle cx="10.400" cy="275.600" r="0.800"/></g>
<path d="M13 279.8h1.200v-1.200z" fill="#bdbdbd"/>
<rect x="2.300" y="284" width="2.600" height="2.600" fill="#111" stroke="#ddd" stroke-width="0.400"/><rect x="3.600" y="285.300" width="2.600" height="2.600" fill="#f4f4f4" stroke="#222" stroke-width="0.300"/>
<path d="M9.800 284.600h2.400v2.400" fill="none" stroke="#dadada" stroke-width="0.600"/><path d="M9.200 284.600l1-.9v1.800zM12.200 287.600l-.9-1h1.800z" fill="#dadada"/>
<rect x="6.200" y="294.600" width="7.600" height="7.800" fill="#f0400c" stroke="#d8d8d8" stroke-width="0.300"/>
<rect x="1.800" y="290.700" width="7.800" height="7.500" fill="#ff9a10" stroke="#e8e8e8" stroke-width="0.300"/>
<rect x="4.300" y="306.800" width="7.400" height="5.400" rx="0.600" fill="none" stroke="#dadada" stroke-width="0.700"/><circle cx="8" cy="309.500" r="1.500" fill="none" stroke="#dadada" stroke-width="0.600" stroke-dasharray="0.8 0.500"/>
<rect x="5.400" y="316.700" width="6.400" height="4.400" rx="0.500" fill="none" stroke="#dadada" stroke-width="0.700"/><path d="M4.300 318.300v4.200h6" fill="none" stroke="#dadada" stroke-width="0.700"/>
<path d="M13 323.9h1.200v-1.200z" fill="#bdbdbd"/>
</svg>
</body></html>
